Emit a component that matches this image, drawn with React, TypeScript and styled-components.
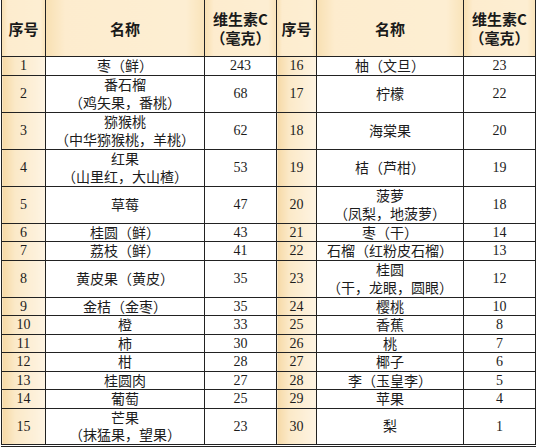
import styled, { createGlobalStyle } from 'styled-components';

const GlobalStyle = createGlobalStyle`
  html, body {
    margin: 0;
    padding: 0;
    background: #ffffff;
  }
  body {
    font-family: 'Liberation Serif', 'Noto Sans CJK SC', serif;
    color: #1c1c1c;
  }
`;

type Row = { no: number; name: string[]; vc: number };

// 左右两半各 15 行，行高由两边中较多的行数决定
const leftRows: Row[] = [
  { no: 1, name: ['枣（鲜）'], vc: 243 },
  { no: 2, name: ['番石榴', '（鸡矢果，番桃）'], vc: 68 },
  { no: 3, name: ['猕猴桃', '（中华猕猴桃，羊桃）'], vc: 62 },
  { no: 4, name: ['红果', '（山里红，大山楂）'], vc: 53 },
  { no: 5, name: ['草莓'], vc: 47 },
  { no: 6, name: ['桂圆（鲜）'], vc: 43 },
  { no: 7, name: ['荔枝（鲜）'], vc: 41 },
  { no: 8, name: ['黄皮果（黄皮）'], vc: 35 },
  { no: 9, name: ['金桔（金枣）'], vc: 35 },
  { no: 10, name: ['橙'], vc: 33 },
  { no: 11, name: ['柿'], vc: 30 },
  { no: 12, name: ['柑'], vc: 28 },
  { no: 13, name: ['桂圆肉'], vc: 27 },
  { no: 14, name: ['葡萄'], vc: 25 },
  { no: 15, name: ['芒果', '（抹猛果，望果）'], vc: 23 },
];

const rightRows: Row[] = [
  { no: 16, name: ['柚（文旦）'], vc: 23 },
  { no: 17, name: ['柠檬'], vc: 22 },
  { no: 18, name: ['海棠果'], vc: 20 },
  { no: 19, name: ['桔（芦柑）'], vc: 19 },
  { no: 20, name: ['菠萝', '（凤梨，地菠萝）'], vc: 18 },
  { no: 21, name: ['枣（干）'], vc: 14 },
  { no: 22, name: ['石榴（红粉皮石榴）'], vc: 13 },
  { no: 23, name: ['桂圆', '（干，龙眼，圆眼）'], vc: 12 },
  { no: 24, name: ['樱桃'], vc: 10 },
  { no: 25, name: ['香蕉'], vc: 8 },
  { no: 26, name: ['桃'], vc: 7 },
  { no: 27, name: ['椰子'], vc: 6 },
  { no: 28, name: ['李（玉皇李）'], vc: 5 },
  { no: 29, name: ['苹果'], vc: 4 },
  { no: 30, name: ['梨'], vc: 1 },
];

// 每一半的列宽：序号 / 名称 / 维生素C
const leftWidths = [44, 159, 72];
const rightWidths = [40, 147, 72];

const Wrap = styled.div`
  padding: 0 0 0 1px;
`;

const Table = styled.table`
  border-collapse: collapse;
  table-layout: fixed;
  width: 535px;
  border-right: 1px solid #222;
  border-bottom: 3px double #222;
`;

const Col = styled.col<{ $w: number }>`
  width: ${(p) => p.$w}px;
`;

const HeadCell = styled.th`
  height: 56px;
  padding: 0;
  border: 1px solid #222;
  border-top: none;
  background: linear-gradient(to right, #f8e0b3 0%, #fdecce 12%, #fdeed2 88%, #f9e3b9 100%);
  font-family: 'Noto Sans CJK SC', sans-serif;
  font-weight: 700;
  font-size: 15px;
  line-height: 19px;
  text-align: center;
  vertical-align: middle;
  color: #1a1a1a;
`;

const BodyRow = styled.tr<{ $tall: boolean }>`
  height: ${(p) => (p.$tall ? 37 : 18.3)}px;
`;

const Cell = styled.td<{ $index?: boolean }>`
  padding: 0;
  border: 1px solid #222;
  font-size: 14px;
  line-height: 17px;
  text-align: center;
  vertical-align: middle;
  white-space: nowrap;
  background: ${(p) =>
    p.$index
      ? 'linear-gradient(to right, #f6d9a6 0%, #fbe9c8 30%, #fef4e3 100%)'
      : '#ffffff'};
`;

const NameLine = styled.div`
  font-family: 'Noto Sans CJK SC', sans-serif;
  font-size: 14px;
  line-height: 17.5px;
`;

function HeaderGroup() {
  return (
    <>
      <HeadCell>序号</HeadCell>
      <HeadCell>名称</HeadCell>
      <HeadCell>
        维生素C
        <br />
        （毫克）
      </HeadCell>
    </>
  );
}

function Half({ row }: { row: Row }) {
  return (
    <>
      <Cell $index>{row.no}</Cell>
      <Cell>
        {row.name.map((line) => (
          <NameLine key={line}>{line}</NameLine>
        ))}
      </Cell>
      <Cell>{row.vc}</Cell>
    </>
  );
}

export default function App() {
  return (
    <>
      <GlobalStyle />
      <Wrap>
        <Table>
          <colgroup>
            {[...leftWidths, ...rightWidths].map((w, i) => (
              <Col key={i} $w={w} />
            ))}
          </colgroup>
          <thead>
            <tr>
              <HeaderGroup />
              <HeaderGroup />
            </tr>
          </thead>
          <tbody>
            {leftRows.map((left, i) => {
              const right = rightRows[i];
              const tall = left.name.length > 1 || right.name.length > 1;
              return (
                <BodyRow key={left.no} $tall={tall}>
                  <Half row={left} />
                  <Half row={right} />
                </BodyRow>
              );
            })}
          </tbody>
        </Table>
      </Wrap>
    </>
  );
}
